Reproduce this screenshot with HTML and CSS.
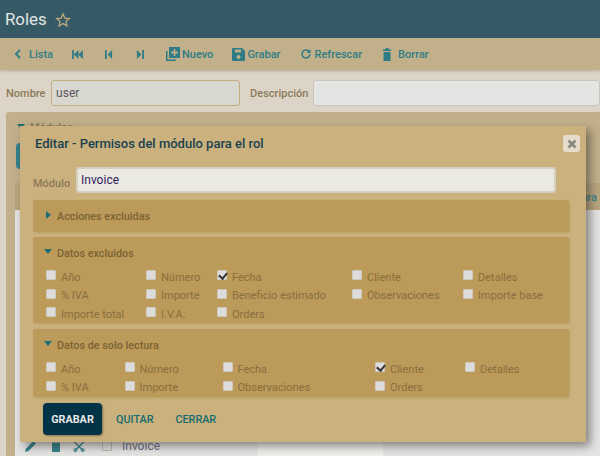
FILE: index.html
```html
<!DOCTYPE html>
<html lang="es">
<head>
<meta charset="utf-8">
<title>Roles</title>
<link rel="stylesheet" href="styles.css">
</head>
<body>
<div class="page">
  <header class="top">
    <h1>Roles</h1>
    <svg class="star" width="16" height="16" viewBox="0 0 24 24"><path d="M12 3l2.7 6.2 6.8.6-5.100 4.500 1.500 6.600L12 17.400l-5.900 3.500 1.500-6.600-5.100-4.500 6.800-.6z" fill="none" stroke="#b8a780" stroke-width="2"/></svg>
  </header>
  <nav class="bar">
    <a class="act lista"><svg width="10" height="12" viewBox="0 0 10 12"><path d="M7 2L3 6l4 4" fill="none" stroke="currentColor" stroke-width="2"/></svg>Lista</a>
    <a class="act m22"><svg width="11" height="9" viewBox="0 0 12 10"><path d="M0 0h2v10H0zM7 0v10L2 5zM12 0v10L7 5z" fill="currentColor"/></svg></a>
    <a class="act m23"><svg width="8" height="9" viewBox="0 0 9 10"><path d="M0 0h2v10H0zM8 0v10L3 5z" fill="currentColor"/></svg></a>
    <a class="act m22"><svg width="8" height="9" viewBox="0 0 9 10"><path d="M7 0h2v10H7zM1 0v10l5-5z" fill="currentColor"/></svg></a>
    <a class="act tight"><svg width="14" height="14" viewBox="0 0 14 14"><path d="M0 4v10h10v-1.500H1.500V4z" fill="currentColor"/><path fill-rule="evenodd" d="M3 0h11v11H3zM7.800 2v2.500H5.300v2h2.500V9h1.500V6.500h2.500v-2H9.300V2z" fill="currentColor"/></svg>Nuevo</a>
    <a class="act tight"><svg width="13" height="13" viewBox="0 0 13 13"><path fill-rule="evenodd" d="M1 0h9l3 3v9a1 1 0 0 1-1 1H1a1 1 0 0 1-1-1V1a1 1 0 0 1 1-1zM3 1.500v3h6v-3zM6.500 7a2 2 0 1 0 0 4 2 2 0 0 0 0-4z" fill="currentColor"/></svg>Grabar</a>
    <a class="act"><svg width="12" height="12" viewBox="0 0 24 24"><path d="M20 12a8 8 0 1 1-2.500-5.800" fill="none" stroke="currentColor" stroke-width="3"/><path d="M21 2v8h-8z" fill="currentColor"/></svg>Refrescar</a>
    <a class="act borrar"><svg width="10" height="13" viewBox="0 0 10 13"><path d="M1 1.500h2.500V0h3v1.500H9V3H1zM1.500 4h7v9h-7z" fill="currentColor"/></svg>Borrar</a>
  </nav>
  <main class="content">
    <div class="fields">
      <label class="lbl">Nombre</label>
      <input class="inp inp-name" value="user">
      <label class="lbl lbl-desc">Descripción</label>
      <input class="inp inp-desc">
    </div>
    <section class="under">
      <div class="under-title"><span class="tri-down"></span>Módulos</div>
      <div class="under-btn"></div>
      <div class="under-head">Datos de solo lectura</div>
      <div class="under-rows"></div>
      <div class="under-row">
        <svg class="ico-edit" width="12" height="12" viewBox="0 0 12 12"><path d="M0 12l1-3.500L8.500 1 11 3.500 3.500 11z" fill="#33808a"/></svg>
        <svg class="ico-del" width="8" height="12" viewBox="0 0 8 12"><path d="M0 1h8v1.500H0zM0 3h8v9H0z" fill="#33808a"/></svg>
        <svg class="ico-cut" width="13" height="13" viewBox="0 0 14 13"><path d="M1 1l10 10M12 1L2 11" stroke="#33808a" stroke-width="1.500" fill="none"/><circle cx="2.500" cy="10.500" r="1.700" fill="none" stroke="#33808a"/><circle cx="10.500" cy="10.500" r="1.700" fill="none" stroke="#33808a"/></svg>
        <span class="box under-box"></span>
        <span class="under-name">Invoice</span>
      </div>
    </section>
  </main>
  <div class="dialog">
    <div class="dlg-head">
      <h2>Editar - Permisos del módulo para el rol</h2>
      <span class="close"><svg width="10" height="10" viewBox="0 0 10 10"><path d="M1.500 1.500l7 7M8.500 1.500l-7 7" stroke="#8a8780" stroke-width="2.600"/></svg></span>
    </div>
    <div class="dlg-field">
      <label class="lbl lbl-mod">Módulo</label>
      <input class="inp inp-mod" value="Invoice">
    </div>
    <section class="frame frame-closed">
      <div class="ftitle"><span class="tri-right"></span>Acciones excluidas</div>
    </section>
    <section class="frame frame-excl">
      <div class="ftitle"><span class="tri-down"></span>Datos excluidos</div>
      <div class="checks excl">
        <label class="chk"><span class="box"></span>Año</label>
        <label class="chk"><span class="box"></span>Número</label>
        <label class="chk"><span class="box on"></span>Fecha</label>
        <label class="chk"><span class="box"></span>Cliente</label>
        <label class="chk"><span class="box"></span>Detalles</label>
        <label class="chk"><span class="box"></span>% IVA</label>
        <label class="chk"><span class="box"></span>Importe</label>
        <label class="chk"><span class="box"></span>Beneficio estimado</label>
        <label class="chk"><span class="box"></span>Observaciones</label>
        <label class="chk"><span class="box"></span>Importe base</label>
        <label class="chk"><span class="box"></span>Importe total</label>
        <label class="chk"><span class="box"></span>I.V.A.</label>
        <label class="chk"><span class="box"></span>Orders</label>
      </div>
    </section>
    <section class="frame frame-ro">
      <div class="ftitle"><span class="tri-down"></span>Datos de solo lectura</div>
      <div class="checks ro">
        <label class="chk"><span class="box"></span>Año</label>
        <label class="chk"><span class="box"></span>Número</label>
        <label class="chk"><span class="box"></span>Fecha</label>
        <label class="chk"><span class="box on"></span>Cliente</label>
        <label class="chk"><span class="box"></span>Detalles</label>
        <label class="chk"><span class="box"></span>% IVA</label>
        <label class="chk"><span class="box"></span>Importe</label>
        <label class="chk"><span class="box"></span>Observaciones</label>
        <label class="chk"><span class="box"></span>Orders</label>
      </div>
    </section>
    <div class="btns">
      <button class="primary">GRABAR</button>
      <a class="link l1">QUITAR</a>
      <a class="link l2">CERRAR</a>
    </div>
  </div>
</div>
</body>
</html>
```

FILE: styles.css
```css
* { box-sizing: border-box; }
html, body { margin: 0; padding: 0; }
body { font-family: Roboto, "Liberation Sans", sans-serif; background: #dcd4c6; }
.page { position: relative; width: 600px; height: 456px; overflow: hidden; }
.top { height: 38px; background: #355a66; display: flex; align-items: center; padding: 0 5px; gap: 8px; }
.top h1 { margin: 0; font-size: 16.800px; font-weight: 400; color: #e3e6e4; }
.star { margin-top: 2px; }
.bar { height: 32px; background: #c2b08a; display: flex; align-items: center; padding: 0 0 0 13px; color: #2f7c86; font-size: 11px; font-weight: 500; box-shadow: 0 1px 3px rgba(120,100,60,.35); position: relative; }
.act { display: flex; align-items: center; gap: 3px; margin-right: 20px; }
.lista { gap: 6px; margin-right: 19px; }
.tight { gap: 2px; margin-right: 19px; }
.borrar { gap: 6px; }
.m22 { margin-right: 22px; }
.m23 { margin-right: 23px; }
.content { padding: 10px 0 0 6px; }
.fields { display: flex; align-items: center; height: 26px; }
.lbl { font-size: 11px; font-weight: 500; color: #8c7a58; }
.inp { font-family: inherit; font-size: 12px; height: 26px; border-radius: 3px; padding: 0 4px; outline: none; }
.inp-name { width: 189px; margin-left: 5.600px; background: #d9d8d0; border: 1px solid #c4ad7e; color: #5d5560; }
.lbl-desc { margin-left: 10px; }
.inp-desc { flex: 1; margin-left: 5px; background: #e4e4e3; border: 1px solid #c9c6bf; }
.under { margin-top: 6px; background: #c2b08a; height: 400px; position: relative; border-radius: 3px 0 0 0; }
.under-title { display: flex; align-items: center; gap: 5px; padding: 9px 11px; font-size: 11px; color: #8c7a58; font-weight: 500; }
.under-btn { position: absolute; left: 10px; top: 31px; width: 40px; height: 26px; background: #33808a; border-radius: 4px; }
.under-head { position: absolute; left: 9px; right: 0; top: 71px; height: 27px; background: #b9a67e; color: #33808a; font-size: 11px; font-weight: 500; text-align: right; padding: 8px 3px 0 0; }
.under-rows { position: absolute; left: 9px; right: 0; top: 98px; height: 220px; background: #e4e4e3; }
.under-row { position: absolute; left: 9px; right: 0; top: 318px; height: 32px; background: linear-gradient(90deg, #e4e4e3 243px, #eeeeec 243px, #eeeeec 368px, #e4e4e3 368px); display: flex; align-items: center; padding-left: 10px; }
.ico-del { margin-left: 15px; }
.ico-cut { margin-left: 13px; }
.box.under-box { margin: 0 0 0 16px; background: #e4e4e3; border-color: #b8b8b6; }
.under-name { color: #6d6a80; font-size: 12px; margin-left: 10px; }
.dialog { position: absolute; left: 20px; top: 126px; width: 566px; height: 316px; background: #cab17d; box-shadow: 4px 4px 9px rgba(50,45,40,.55); padding: 0 13px; }
.dlg-head { height: 41px; padding: 9px 0 0 2px; display: flex; align-items: flex-start; justify-content: space-between; }
.dlg-head h2 { margin: 0; line-height: 18px; font-size: 13px; font-weight: 500; color: #1a4150; }
.close { width: 17px; height: 17px; margin-right: -7px; background: #e7dccb; border-radius: 3px; display: flex; align-items: center; justify-content: center; }
.dlg-field { display: flex; align-items: center; height: 26px; margin-bottom: 7px; }
.lbl-mod { width: 37px; margin-top: 6px; white-space: nowrap; }
.inp-mod { width: 480px; margin-left: 6px; background: #eaeae2; border: 2px solid #d4d0c0; color: #33205f; font-size: 12px; padding: 0 3px; }
.frame { background: #bb9a5a; margin-bottom: 5px; width: 536px; border-radius: 2px; padding: 9px 0 0 11px; box-shadow: 1px 1px 2px rgba(150,120,60,.3); }
.frame-closed { height: 32px; }
.frame-excl { height: 86px; margin-bottom: 6px; }
.frame-ro { height: 68px; }
.ftitle { display: flex; align-items: center; font-size: 10.800px; font-weight: 500; color: #7c6332; gap: 5px; height: 14px; }
.tri-right { width: 0; height: 0; border-left: 5px solid #1c6f74; border-top: 4.500px solid transparent; border-bottom: 4.500px solid transparent; margin: -3px 1px 0 2px; }
.tri-down { display: inline-block; width: 0; height: 0; border-top: 5px solid #1c6f74; border-left: 4px solid transparent; border-right: 4px solid transparent; margin-top: -3px; }
.checks { display: grid; grid-auto-rows: 18.500px; font-size: 11px; margin: 8px 0 0 2px; }
.excl { grid-template-columns: 100px 71px 135px 111px 1fr; }
.ro { grid-template-columns: 78.500px 98px 152.500px 90px 1fr; }
.chk { display: flex; align-items: center; gap: 5px; color: #8a6f3c; white-space: nowrap; height: 18px; }
.box { display: inline-block; flex: none; width: 10px; height: 10px; margin-top: -4px; background: #dcdcdc; border: 1px solid #cfc8b8; border-radius: 1px; position: relative; }
.box.on::after { content: ""; position: absolute; left: 2px; top: 0; width: 4px; height: 6px; border: solid #333; border-width: 0 2px 2px 0; transform: rotate(40deg); }
.btns { display: flex; align-items: center; margin: 6px 0 0 10px; }
.primary { width: 59px; height: 32px; padding: 0; background: #033347; color: #e8e8e4; border: 0; border-radius: 4px; font-family: inherit; font-size: 10.800px; font-weight: 700; box-shadow: 1px 1px 2px rgba(60,50,30,.5); }
.link { color: #146c70; font-size: 10.800px; font-weight: 500; }
.l1 { margin-left: 14px; }
.l2 { margin-left: 22px; }
```
